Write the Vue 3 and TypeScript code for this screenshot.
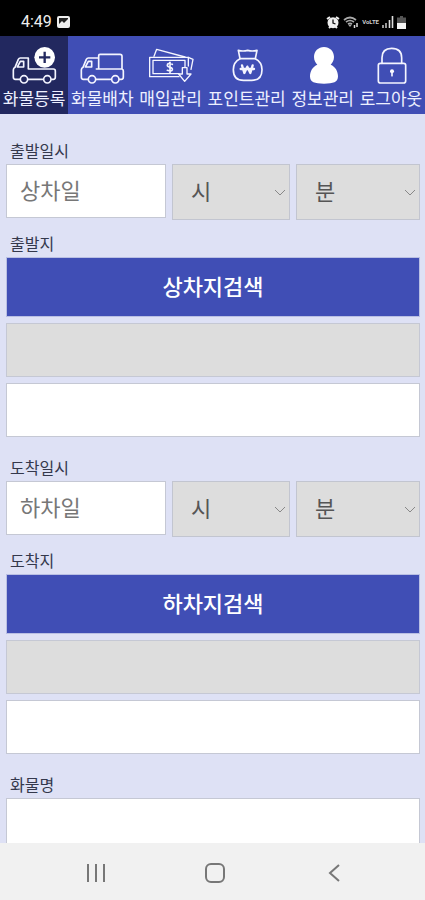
<script setup lang="ts">
import { reactive } from 'vue'

type IconName = 'register' | 'dispatch' | 'purchase' | 'point' | 'profile' | 'logout'

interface Tab {
  icon: IconName
  label: string
  viewBox: string
}

interface Stop {
  id: string
  timeLabel: string
  datePlaceholder: string
  placeLabel: string
  searchLabel: string
  date: string
  hour: string
  minute: string
  address: string
  detail: string
}

const tabs: Tab[] = [
  { icon: 'register', label: '화물등록', viewBox: '33 135 138 120' },
  { icon: 'dispatch', label: '화물배차', viewBox: '239 135 138 120' },
  { icon: 'purchase', label: '매입관리', viewBox: '442 135 138 120' },
  { icon: 'point', label: '포인트관리', viewBox: '35 135 138 120' },
  { icon: 'profile', label: '정보관리', viewBox: '265 135 138 120' },
  { icon: 'logout', label: '로그아웃', viewBox: '469 135 138 120' },
]

const stops = reactive<Stop[]>([
  {
    id: 'departure',
    timeLabel: '출발일시',
    datePlaceholder: '상차일',
    placeLabel: '출발지',
    searchLabel: '상차지검색',
    date: '',
    hour: '',
    minute: '',
    address: '',
    detail: '',
  },
  {
    id: 'arrival',
    timeLabel: '도착일시',
    datePlaceholder: '하차일',
    placeLabel: '도착지',
    searchLabel: '하차지검색',
    date: '',
    hour: '',
    minute: '',
    address: '',
    detail: '',
  },
])

const cargo = reactive({ name: '' })
const active: IconName = 'register'
</script>

<template>
  <div class="screen">
    <header class="status">
      <div class="status-side">
        <span class="clock">4:49</span>
        <svg width="13" height="12" viewBox="0 0 13 12" aria-hidden="true">
          <rect x="1" y="1" width="11" height="10" rx="1" fill="#222" stroke="#eee" stroke-width="2" />
          <path d="M2 10V8L5 5L7 7L11 3V10Z" fill="#eee" />
        </svg>
      </div>
      <div class="status-side status-icons">
        <svg width="14" height="13" viewBox="0 0 14 13" aria-hidden="true">
          <path d="M1 3L4 1M13 3L10 1M3 12L4.500 10.500M11 12L9.500 10.500" stroke="#eee" stroke-width="2" />
          <circle cx="7" cy="6.700" r="5.500" fill="#eee" />
          <path d="M7 3.500V7L9.500 8" fill="none" stroke="#111" stroke-width="1.300" />
        </svg>
        <svg width="16" height="12" viewBox="0 0 16 12" aria-hidden="true">
          <path d="M1 4Q7 -1 13 4M3 6Q7 3 11 6M5 8Q7 6.500 9 8" fill="none" stroke="#aaa" stroke-width="1.700" />
          <path d="M5 8.500H9L7 11Z" fill="#aaa" />
          <path d="M11.500 9V12M14 7V11" stroke="#ddd" stroke-width="1.500" />
        </svg>
        <span class="volte">VoLTE</span>
        <svg width="12" height="12" viewBox="0 0 12 12" aria-hidden="true">
          <path d="M1 9V12M4 7V12" stroke="#999" stroke-width="2" />
          <path d="M7.500 4V12M10.500 0V12" stroke="#ddd" stroke-width="1.600" />
        </svg>
        <svg width="9" height="13" viewBox="0 0 9 13" aria-hidden="true">
          <path d="M3 0H6V1.500H9V7H0V1.500H3Z" fill="#555" />
          <path d="M0 7H9V13H0Z" fill="#f4f4f4" />
        </svg>
      </div>
    </header>

    <nav class="tabs">
      <a
        v-for="tab in tabs"
        :key="tab.icon"
        href="#"
        class="tab"
        :class="{ 'tab-active': tab.icon === active }"
      >
        <svg class="tab-icon" :viewBox="tab.viewBox" aria-hidden="true">
          <g v-if="tab.icon === 'register'">
            <path d="M60 238H46Q40 238 40 231V210Q40 205 45 202L55 178Q57 174 61 174H85V207H160Q166 207 166 213V231Q166 238 160 238H155M128 238H84" />
            <path d="M52 201H71V184H61Z" />
            <circle cx="72" cy="238" r="11" />
            <circle cx="142" cy="238" r="11" />
            <circle cx="134" cy="172" r="31" class="solid" />
            <path d="M134 155V189M117 172H151" class="plus" />
          </g>
          <g v-else-if="tab.icon === 'dispatch'">
            <path d="M266 238H252Q246 238 246 231V210Q246 205 251 202L261 178Q263 174 267 174H298M298 207V167Q298 163 302 163H362Q368 163 368 169V207H291M368 207Q372 208 372 213V231Q372 238 366 238H361M334 238H290" />
            <path d="M258 201H277V184H267Z" />
            <circle cx="278" cy="238" r="11" />
            <circle cx="348" cy="238" r="11" />
          </g>
          <g v-else-if="tab.icon === 'purchase'" class="fine">
            <path d="M460 169L468 148L553 171M563 172L577 178L571 208" />
            <path d="M535 230H447V172H563V198" />
            <path d="M535 221H457V181H553V200" />
            <path d="M515 193Q500 187 500 196Q500 200 508 202Q516 204 515 209Q513 216 500 211M508 187V218" class="won" />
            <path d="M545 203H559V222H571L552 244L534 222H545Z" />
          </g>
          <g v-else-if="tab.icon === 'point'">
            <path d="M83 176L78 151Q92 155 106 151Q120 155 134 151L129 176Z" />
            <path d="M83 176C69 183 63 194 63 209C63 231 75 241 94 241H118C138 241 149 231 149 209C149 194 143 183 129 176" />
            <path d="M89 196L96 219L105 200L114 219L121 196M85 207H125" class="bold" />
          </g>
          <g v-else-if="tab.icon === 'profile'">
            <path
              class="solid"
              d="M337 141C354 141 367 154 367 171C367 182 362 188 357 194C371 200 379 213 379 229C379 247 365 251 337 251C309 251 295 247 295 229C295 213 303 200 317 194C312 188 307 182 307 171C307 154 320 141 337 141Z"
            />
          </g>
          <g v-else>
            <path d="M511 190V173Q511 145 540 145Q570 145 570 173V190" />
            <rect x="500" y="190" width="82" height="59" rx="6" />
            <circle cx="541" cy="214" r="6" class="solid" />
            <path d="M541 215V227" />
          </g>
        </svg>
        <span class="tab-label">{{ tab.label }}</span>
      </a>
    </nav>

    <main class="content">
      <form class="form" @submit.prevent>
        <template v-for="stop in stops" :key="stop.id">
          <section class="group group-time">
            <label class="label" :for="`${stop.id}-date`">{{ stop.timeLabel }}</label>
            <div class="row">
              <input
                :id="`${stop.id}-date`"
                v-model="stop.date"
                class="field"
                type="text"
                :placeholder="stop.datePlaceholder"
              />
              <div class="picker">
                <select v-model="stop.hour" class="select" :aria-label="`${stop.timeLabel} 시`">
                  <option value="">시</option>
                  <option v-for="h in 24" :key="h" :value="String(h - 1)">{{ h - 1 }}</option>
                </select>
                <svg class="chevron" viewBox="0 0 12 7" aria-hidden="true"><path d="M1 1L6 6L11 1" /></svg>
              </div>
              <div class="picker">
                <select v-model="stop.minute" class="select" :aria-label="`${stop.timeLabel} 분`">
                  <option value="">분</option>
                  <option v-for="m in 6" :key="m" :value="String((m - 1) * 10)">{{ (m - 1) * 10 }}</option>
                </select>
                <svg class="chevron" viewBox="0 0 12 7" aria-hidden="true"><path d="M1 1L6 6L11 1" /></svg>
              </div>
            </div>
          </section>

          <section class="group group-place">
            <label class="label" :for="`${stop.id}-detail`">{{ stop.placeLabel }}</label>
            <div class="stack">
              <button type="button" class="search">{{ stop.searchLabel }}</button>
              <input v-model="stop.address" class="field field-locked" type="text" readonly :aria-label="stop.placeLabel" />
              <input :id="`${stop.id}-detail`" v-model="stop.detail" class="field" type="text" />
            </div>
          </section>
        </template>

        <section class="group">
          <label class="label" for="cargo-name">화물명</label>
          <input id="cargo-name" v-model="cargo.name" class="field" type="text" />
        </section>
      </form>
    </main>

    <footer class="system">
      <button type="button" class="key" aria-label="최근 앱">
        <svg width="20" height="20" viewBox="0 0 20 20"><path d="M2 1V19M10 1V19M18 1V19" /></svg>
      </button>
      <button type="button" class="key" aria-label="홈">
        <svg width="20" height="20" viewBox="0 0 20 20"><rect x="1" y="1" width="18" height="18" rx="5" /></svg>
      </button>
      <button type="button" class="key" aria-label="뒤로">
        <svg width="20" height="20" viewBox="0 0 20 20"><path d="M15 2L6 10L15 18" /></svg>
      </button>
    </footer>
  </div>
</template>

<style>
body {
  margin: 0;
}
</style>

<style scoped>
.screen {
  display: flex;
  flex-direction: column;
  height: 100vh;
  overflow: hidden;
  background: #dee1f5;
  font-family: 'Noto Sans CJK KR', 'Noto Sans', sans-serif;
}

.screen *,
.screen {
  box-sizing: border-box;
}

.status {
  flex: none;
  display: flex;
  align-items: center;
  justify-content: space-between;
  height: 36px;
  padding: 8px 19px 0 21px;
  background: #000;
  color: #eee;
}

.status-side {
  display: flex;
  align-items: center;
  gap: 5px;
}

.status-icons {
  gap: 3px;
}

.clock {
  font: 400 16px/20px Roboto, sans-serif;
}

.volte {
  font: 700 6px/12px Roboto, sans-serif;
  color: #ccc;
}

.tabs {
  flex: none;
  display: flex;
  background: #404eb5;
}

.tab {
  flex: 1 1 auto;
  display: flex;
  flex-direction: column;
  align-items: center;
  gap: 2px;
  padding: 9px 2px 5px;
  color: #eef0ff;
  text-decoration: none;
}

.tab-active {
  background: #22285f;
}

.tab-icon {
  width: 46px;
  height: 40px;
  fill: none;
  stroke: #f4f5ff;
  stroke-width: 5;
  stroke-linejoin: round;
  stroke-linecap: round;
}

.tab-icon .fine {
  stroke-width: 4;
}

.tab-icon .solid {
  fill: #fff;
  stroke: none;
}

.tab-icon .plus {
  stroke: #22285f;
  stroke-width: 7;
  stroke-linecap: butt;
}

.tab-icon .won {
  stroke-width: 5;
}

.tab-icon .bold {
  stroke-width: 7;
}

.tab-label {
  font-size: 17px;
  line-height: 22px;
  white-space: nowrap;
}

.content {
  flex: 1 1 0;
  min-height: 0;
  overflow: hidden;
}

.form {
  padding: 25px 5px 20px 6px;
}

.group {
  display: flex;
  flex-direction: column;
}

.group-time {
  margin-bottom: 12px;
}

.group-place {
  margin-bottom: 19px;
}

.label {
  padding: 0 4px 3px;
  color: #34384c;
  font-size: 16px;
  line-height: 22px;
}

.row {
  display: grid;
  grid-template-columns: 160fr 118fr 124fr;
  gap: 6px;
  align-items: start;
}

.stack {
  display: flex;
  flex-direction: column;
  gap: 6px;
}

.field {
  width: 100%;
  min-width: 0;
  height: 54px;
  margin: 0;
  padding: 0 13px 4px;
  border: 1px solid #c5c8d4;
  border-radius: 0;
  background: #fff;
  color: #444;
  font-family: inherit;
  font-size: 22px;
  outline: none;
}

.field::placeholder {
  color: #777;
  opacity: 1;
}

.field-locked {
  background: #ddd;
}

.picker {
  display: grid;
  align-items: center;
}

.select {
  grid-area: 1 / 1;
  width: 100%;
  height: 56px;
  margin: 0;
  padding: 0 18px 4px;
  border: 1px solid #c2c5d0;
  border-radius: 0;
  background: #ddd;
  color: #555;
  font-family: inherit;
  font-size: 22px;
  appearance: none;
}

.chevron {
  grid-area: 1 / 1;
  justify-self: end;
  width: 12px;
  height: 7px;
  margin-right: 4px;
  fill: none;
  stroke: #888;
  pointer-events: none;
}

.search {
  height: 60px;
  padding: 0 13px 4px;
  border: 1px solid #b9bfe3;
  background: #404eb5;
  color: #fff;
  font-family: inherit;
  font-size: 22px;
  font-weight: 500;
}

.system {
  flex: none;
  display: grid;
  grid-template-columns: repeat(3, 1fr);
  height: 57px;
  padding: 0 32px 3px 37px;
  background: #f1f1f1;
}

.key {
  display: flex;
  align-items: center;
  justify-content: center;
  padding: 6px 0 0;
  border: 0;
  background: none;
}

.key svg {
  fill: none;
  stroke: #777;
  stroke-width: 2;
}
</style>
